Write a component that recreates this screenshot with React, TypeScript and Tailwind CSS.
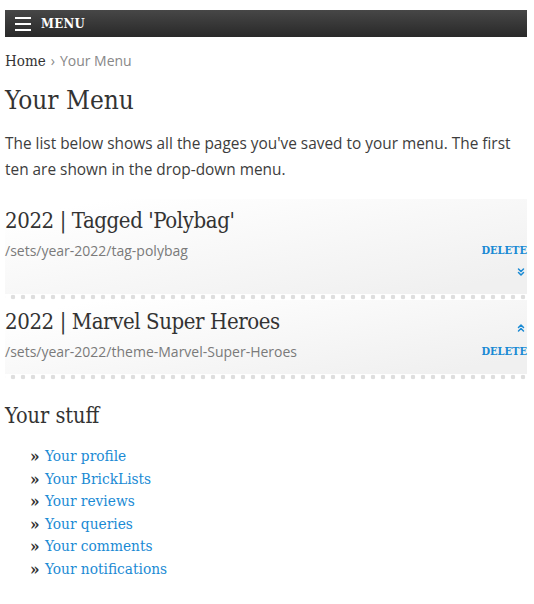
import { ChevronsDown, ChevronsUp } from "lucide-react";

const serif = "font-['DejaVu_Serif',serif] font-stretch-condensed";
const sans = "font-['Open_Sans',sans-serif]";

interface SavedPage {
  title: string;
  path: string;
  up?: boolean;
  down?: boolean;
}

const pages: SavedPage[] = [
  { title: "2022 | Tagged 'Polybag'", path: "/sets/year-2022/tag-polybag", down: true },
  { title: "2022 | Marvel Super Heroes", path: "/sets/year-2022/theme-Marvel-Super-Heroes", up: true },
];

const stuff = [
  "Your profile",
  "Your BrickLists",
  "Your reviews",
  "Your queries",
  "Your comments",
  "Your notifications",
];

function Dots() {
  return (
    <div className="h-[6px] w-full bg-[radial-gradient(circle,#dedede_2px,transparent_2.6px)] bg-[length:10px_6px] bg-[position:3px_0]" />
  );
}

export default function App() {
  return (
    <div className={`min-h-[604px] bg-white pl-[5px] pr-[7px] pt-[10px] text-[#333] ${sans}`}>
      <div className="flex h-[27px] items-center bg-gradient-to-b from-[#474747] to-[#292929] pl-[10px]">
        <div className="flex w-[16px] flex-col gap-[4px]">
          <span className="h-[2px] bg-white" />
          <span className="h-[2px] bg-white" />
          <span className="h-[2px] bg-white" />
        </div>
        <span className={`ml-[10px] text-[13px] font-bold tracking-[0.3px] text-white ${serif}`}>MENU</span>
      </div>

      <div className="mt-[14px] flex items-center text-[14px] leading-[20px]">
        <span className={`text-[15px] text-[#333] ${serif}`}>Home</span>
        <span className="mx-[5px] text-[#888]">›</span>
        <span className="text-[#888]">Your Menu</span>
      </div>

      <h1 className={`mt-[13px] text-[26px] leading-[32px] text-[#333] ${serif}`}>Your Menu</h1>

      <p className="mt-[15px] text-[15.4px] leading-[26px] text-[#3d3d3d]">
        The list below shows all the pages you've saved to your menu. The first ten are shown in the drop-down menu.
      </p>

      <div className="mt-[16px]">
        {pages.map((p) => (
          <div key={p.path}>
            <div className="bg-[linear-gradient(170deg,#ffffff_10%,#f0f0f0_90%)] pt-[8px] pb-[12px]">
              <div className="flex items-end justify-between">
                <h2 className={`text-[22px] leading-[28px] tracking-[-0.4px] text-[#333] ${serif}`}>{p.title}</h2>
                {p.up && <ChevronsUp className="mb-[2px] h-[12px] w-[12px] text-[#1a8ad4]" strokeWidth={3} />}
              </div>
              <div className="mt-[6px] flex items-center justify-between text-[14px] leading-[20px]">
                <span className="text-[#7a7a7a]">{p.path}</span>
                <span className={`text-[11px] font-bold text-[#1a8ad4] ${serif}`}>DELETE</span>
              </div>
              {p.down && (
                <div className="mt-[5px] mb-[4px] flex justify-end">
                  <ChevronsDown className="h-[12px] w-[12px] text-[#1a8ad4]" strokeWidth={3} />
                </div>
              )}
            </div>
            <Dots />
          </div>
        ))}
      </div>

      <h2 className={`mt-[22px] text-[21.5px] leading-[28px] text-[#333] ${serif}`}>Your stuff</h2>

      <ul className="mt-[15px] pl-[25px]">
        {stuff.map((s) => (
          <li key={s} className={`flex items-center text-[15.3px] leading-[22.5px] ${serif}`}>
            <span className="w-[15px] text-[17px] font-bold leading-[22.5px] text-[#333]">»</span>
            <a href="#" className="text-[#1a8ad4]">{s}</a>
          </li>
        ))}
      </ul>
    </div>
  );
}
